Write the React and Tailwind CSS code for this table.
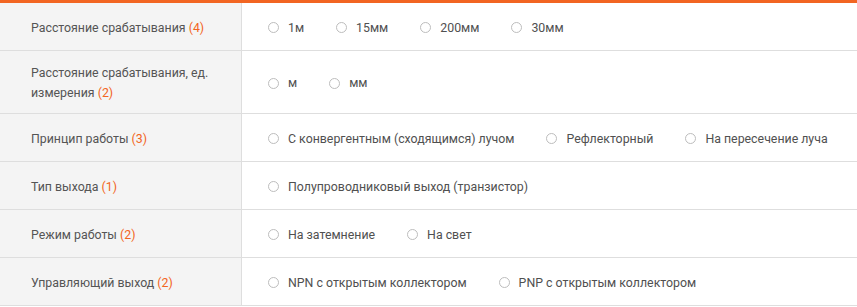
import React from 'react';

const rows = [
  { label: 'Расстояние срабатывания', count: 4, options: ['1м', '15мм', '200мм', '30мм'] },
  { label: 'Расстояние срабатывания, ед. измерения', count: 2, options: ['м', 'мм'] },
  { label: 'Принцип работы', count: 3, options: ['С конвергентным (сходящимся) лучом', 'Рефлекторный', 'На пересечение луча'] },
  { label: 'Тип выхода', count: 1, options: ['Полупроводниковый выход (транзистор)'] },
  { label: 'Режим работы', count: 2, options: ['На затемнение', 'На свет'] },
  { label: 'Управляющий выход', count: 2, options: ['NPN с открытым коллектором', 'PNP с открытым коллектором'] },
];

function Radio({ text }) {
  return (
    <label className="flex items-center mr-[32px] whitespace-nowrap cursor-pointer">
      <span className="w-[11px] h-[11px] rounded-full border border-[#bdbdbd] bg-white mr-[9px] shrink-0" />
      <span className="text-[#505050]">{text}</span>
    </label>
  );
}

export default function App() {
  return (
    <div className="w-[857px] bg-white border-t-[3px] border-[#f26522] text-[12.35px] leading-[20px]" style={{ fontFamily: 'Roboto, "Liberation Sans", sans-serif' }}>
      {rows.map((row) => (
        <div key={row.label} className="flex border-b border-[#dedede]">
          <div className="w-[242px] shrink-0 bg-[#f4f4f4] border-r border-[#dedede] min-h-[47px] flex items-center pl-[31px] pr-[20px] pt-[12px] pb-[10px] text-[#555]">
            <div>
              {row.label} <span className="text-[#f26522]">({row.count})</span>
            </div>
          </div>
          <div className="flex-1 flex items-center pl-[26px] pt-[2px]">
            {row.options.map((opt) => (
              <Radio key={opt} text={opt} />
            ))}
          </div>
        </div>
      ))}
    </div>
  );
}
